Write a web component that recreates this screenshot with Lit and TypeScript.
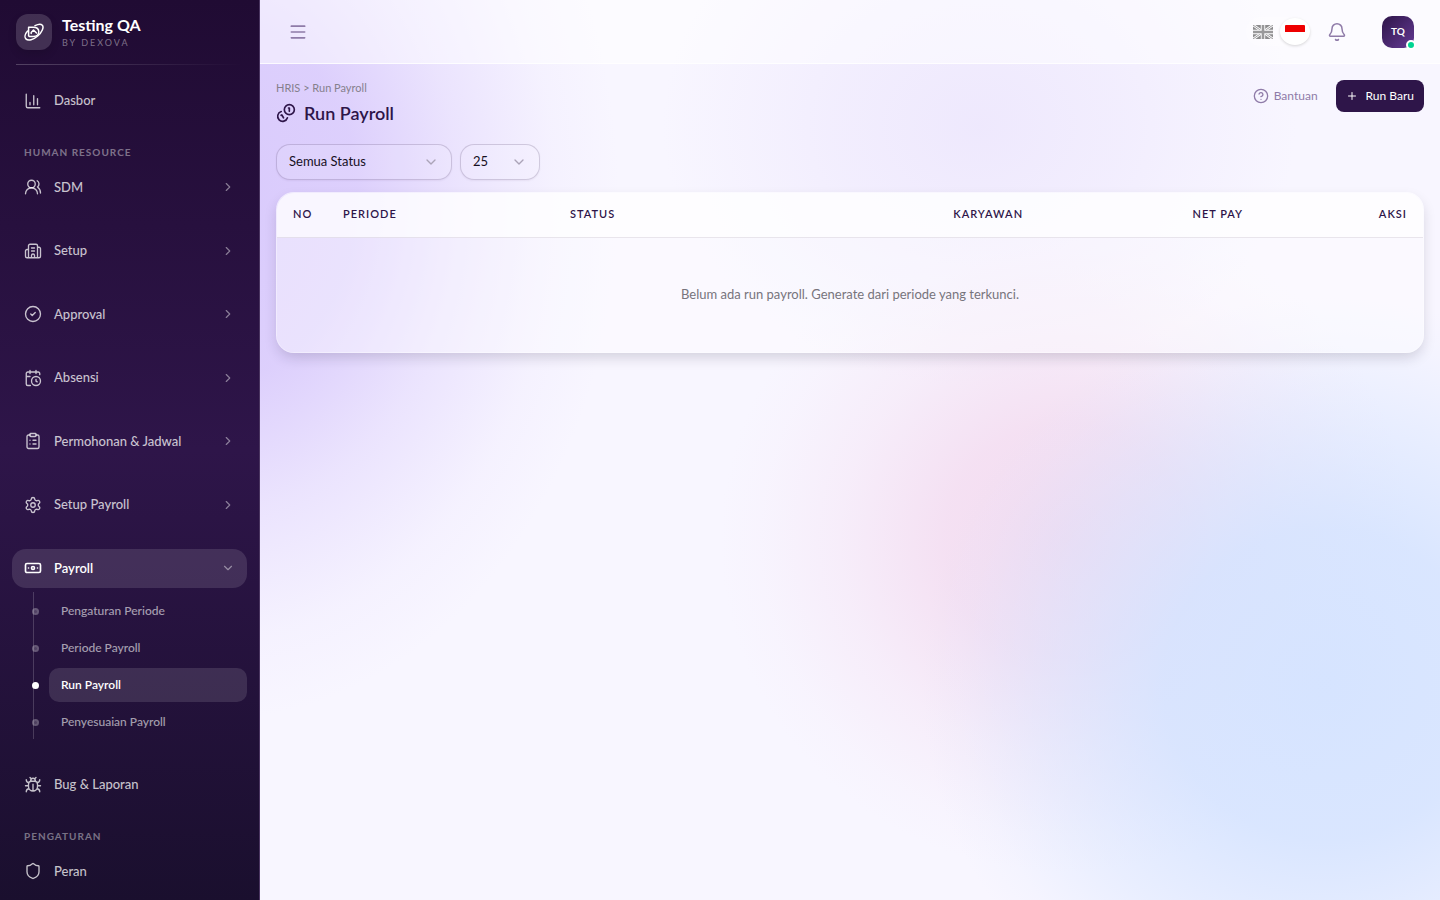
import { LitElement, html, svg, css, nothing } from "lit";
import { customElement, property, state } from "lit/decorators.js";
import { classMap } from "lit/directives/class-map.js";

const ICONS: Record<string, unknown> = {
  chart: svg`<path d="M3 3v16a2 2 0 0 0 2 2h16M18 17V9M13 17V5M8 17v-3"/>`,
  users: svg`<path d="M18 21a8 8 0 0 0-16 0"/><circle cx="10" cy="8" r="5"/><path d="M22 20c0-3.37-2-6.5-4-8a5 5 0 0 0-.45-8.3"/>`,
  building: svg`<path d="M10 12h4M10 8h4M14 21v-3a2 2 0 0 0-4 0v3M6 10H4a2 2 0 0 0-2 2v7a2 2 0 0 0 2 2h16a2 2 0 0 0 2-2V9a2 2 0 0 0-2-2h-2M6 21V5a2 2 0 0 1 2-2h8a2 2 0 0 1 2 2v16"/>`,
  check: svg`<circle cx="12" cy="12" r="10"/><path d="m9 12 2 2 4-4"/>`,
  calendar: svg`<path d="M16 14v2.2l1.6 1M16 2v4M21 7.5V6a2 2 0 0 0-2-2H5a2 2 0 0 0-2 2v14a2 2 0 0 0 2 2h3.5M3 10h5M8 2v4"/><circle cx="16" cy="16" r="6"/>`,
  clipboard: svg`<rect width="8" height="4" x="8" y="2" rx="1"/><path d="M16 4h2a2 2 0 0 1 2 2v14a2 2 0 0 1-2 2H6a2 2 0 0 1-2-2V6a2 2 0 0 1 2-2h2M12 11h4M12 16h4M8 11h.01M8 16h.01"/>`,
  settings: svg`<path d="M9.671 4.136a2.34 2.34 0 0 1 4.659 0 2.34 2.34 0 0 0 3.319 1.915 2.34 2.34 0 0 1 2.33 4.033 2.34 2.34 0 0 0 0 3.831 2.34 2.34 0 0 1-2.33 4.033 2.34 2.34 0 0 0-3.319 1.915 2.34 2.34 0 0 1-4.659 0 2.34 2.34 0 0 0-3.32-1.915 2.34 2.34 0 0 1-2.33-4.033 2.34 2.34 0 0 0 0-3.831A2.34 2.34 0 0 1 6.35 6.051a2.34 2.34 0 0 0 3.319-1.915"/><circle cx="12" cy="12" r="3"/>`,
  banknote: svg`<rect width="20" height="12" x="2" y="6" rx="2"/><circle cx="12" cy="12" r="2"/><path d="M6 12h.01M18 12h.01"/>`,
  bug: svg`<path d="M12 20v-9M14 7a4 4 0 0 1 4 4v3a6 6 0 0 1-12 0v-3a4 4 0 0 1 4-4zM14.12 3.88 16 2M21 21a4 4 0 0 0-3.81-4M21 5a4 4 0 0 1-3.55 3.97M22 13h-4M3 21a4 4 0 0 1 3.81-4M3 5a4 4 0 0 0 3.55 3.97M6 13H2M8 2l1.88 1.88M9 7.13V6a3 3 0 1 1 6 0v1.13"/>`,
  shield: svg`<path d="M20 13c0 5-3.5 7.5-7.66 8.95a1 1 0 0 1-.67-.01C7.5 20.5 4 18 4 13V6a1 1 0 0 1 1-1c2 0 4.5-1.2 6.24-2.72a1.17 1.17 0 0 1 1.52 0C14.51 3.81 17 5 19 5a1 1 0 0 1 1 1z"/>`,
  right: svg`<path d="m9 18 6-6-6-6"/>`,
  down: svg`<path d="m6 9 6 6 6-6"/>`,
  menu: svg`<path d="M4 5h16M4 12h16M4 19h16"/>`,
  bell: svg`<path d="M10.268 21a2 2 0 0 0 3.464 0M3.262 15.326A1 1 0 0 0 4 17h16a1 1 0 0 0 .74-1.673C19.41 13.956 18 12.499 18 8A6 6 0 0 0 6 8c0 4.499-1.411 5.956-2.738 7.326"/>`,
  help: svg`<circle cx="12" cy="12" r="10"/><path d="M9.09 9a3 3 0 0 1 5.83 1c0 2-3 3-3 3M12 17h.01"/>`,
  plus: svg`<path d="M5 12h14M12 5v14"/>`,
  coins: svg`<path d="M13.744 17.736a6 6 0 1 1-7.48-7.48M15 6h1v4M6.134 14.768l.866-.5 2 3.464"/><circle cx="16" cy="8" r="6"/>`,
};

@customElement("ui-icon")
class UiIcon extends LitElement {
  @property() name = "";
  @property({ type: Number }) size = 18;
  @property({ type: Number }) weight = 2;
  static styles = css`
    :host { display: inline-flex; flex: none; }
    svg { display: block; fill: none; stroke: currentColor; stroke-linecap: round; stroke-linejoin: round; }
  `;
  render() {
    return html`<svg width=${this.size} height=${this.size} viewBox="0 0 24 24" stroke-width=${this.weight} aria-hidden="true">${ICONS[this.name]}</svg>`;
  }
}

interface Item {
  label: string;
  icon: string;
  leaf?: boolean;
  children?: string[];
}

const SECTIONS: { title?: string; items: Item[] }[] = [
  { items: [{ label: "Dasbor", icon: "chart", leaf: true }] },
  {
    title: "HUMAN RESOURCE",
    items: [
      { label: "SDM", icon: "users" },
      { label: "Setup", icon: "building" },
      { label: "Approval", icon: "check" },
      { label: "Absensi", icon: "calendar" },
      { label: "Permohonan & Jadwal", icon: "clipboard" },
      { label: "Setup Payroll", icon: "settings" },
      {
        label: "Payroll",
        icon: "banknote",
        children: ["Pengaturan Periode", "Periode Payroll", "Run Payroll", "Penyesuaian Payroll"],
      },
      { label: "Bug & Laporan", icon: "bug", leaf: true },
    ],
  },
  { title: "PENGATURAN", items: [{ label: "Peran", icon: "shield", leaf: true }] },
];

@customElement("app-sidebar")
class AppSidebar extends LitElement {
  @state() private open = "Payroll";
  static styles = css`
    :host {
      box-sizing: border-box; flex: none; width: 260px; display: flex; flex-direction: column; overflow: hidden;
      background: linear-gradient(180deg, #200b33 0%, #2e1549 50%, #1a0f2e 100%);
      border-right: 1px solid #4a3560; color: #fff;
    }
    .brand { display: flex; align-items: center; gap: 10px; padding: 14px 16px; }
    .mark {
      display: grid; place-items: center; width: 36px; height: 36px; border-radius: 12px;
      background: rgba(255, 255, 255, 0.15); box-shadow: 0 4px 8px rgba(0, 0, 0, 0.12);
    }
    .name { font-size: 16px; line-height: 22px; font-weight: 700; }
    .by { font-size: 9px; line-height: 14px; letter-spacing: 2px; color: rgba(255, 255, 255, 0.42); }
    .rule { flex: none; height: 1px; margin: 0 16px; background: linear-gradient(90deg, rgba(255, 255, 255, 0.22), transparent); }
    nav { padding: 16px 12px; }
    .title { margin: 24px 12px 8px; font-size: 10px; line-height: 15px; font-weight: 700; letter-spacing: 1px; color: rgba(255, 255, 255, 0.42); }
    .list { display: flex; flex-direction: column; gap: 24px; margin: 0; padding: 0; list-style: none; }
    .row {
      box-sizing: border-box; width: 100%; display: flex; align-items: center; gap: 12px; padding: 10px 12px;
      border: 0; border-radius: 14px; background: none; color: rgba(255, 255, 255, 0.75); text-decoration: none;
      font: inherit; font-size: 13px; line-height: 1.5; font-weight: 500; text-align: left;
    }
    .row .text { flex: 1; }
    .row .arrow { color: rgba(255, 255, 255, 0.45); }
    .row.on { background: rgba(255, 255, 255, 0.12); color: #fff; font-weight: 600; }
    .sub {
      margin: 4px 0 2px 21px; padding: 2px 0 0 15px; border-left: 1px solid rgba(255, 255, 255, 0.18);
      display: flex; flex-direction: column; gap: 3px; list-style: none;
    }
    .sub li { position: relative; }
    .sub a {
      display: block; padding: 8px 12px; border-radius: 10px; text-decoration: none;
      color: rgba(255, 255, 255, 0.6); font-size: 12px; line-height: 18px; font-weight: 500;
    }
    .sub li::before {
      content: ""; position: absolute; left: -17px; top: 14px; box-sizing: border-box; width: 7px; height: 7px;
      border-radius: 50%; border: 2px solid rgba(255, 255, 255, 0.12); background: rgba(255, 255, 255, 0.2);
    }
    .sub .current a { background: rgba(255, 255, 255, 0.12); color: #fff; font-weight: 600; }
    .sub .current::before { background: #fff; border-color: #fff; }
  `;
  private item(i: Item) {
    if (i.leaf) {
      return html`<li><a class="row" href="#"><ui-icon name=${i.icon} weight="1.8"></ui-icon><span class="text">${i.label}</span></a></li>`;
    }
    const on = this.open === i.label;
    return html`<li>
      <button type="button" class=${classMap({ row: true, on })} aria-expanded=${on} @click=${() => (this.open = on ? "" : i.label)}>
        <ui-icon name=${i.icon} weight=${on ? 2.2 : 1.8}></ui-icon><span class="text">${i.label}</span>
        <ui-icon class="arrow" name=${on ? "down" : "right"} size="14"></ui-icon>
      </button>
      ${on && i.children
        ? html`<ul class="sub">${i.children.map((c) => html`<li class=${c === "Run Payroll" ? "current" : ""}><a href="#">${c}</a></li>`)}</ul>`
        : nothing}
    </li>`;
  }
  render() {
    return html`
      <div class="brand">
        <span class="mark">
          <svg width="20" height="20" viewBox="0 0 20 20" fill="none" stroke="#fff" stroke-width="1.5" stroke-linecap="round" stroke-linejoin="round" aria-hidden="true">
            <path d="M3.600 9C1 11.800.300 15.200 1.900 16.900c2.300 2.200 7.600.8 11.800-2.900C18 10.200 20.200 5.200 18.300 3.200 16.900 1.800 14 2.200 11 3.700"/>
            <path d="M4.600 14V5.200h4.600c3.500 0 5.600 1.800 5.600 4.600 0 2.900-2.300 4.700-5.600 4.700H5.400"/>
            <path d="M7.200 11.600V10.500L9.500 8l3 3"/>
          </svg>
        </span>
        <div><div class="name">Testing QA</div><div class="by">BY DEXOVA</div></div>
      </div>
      <div class="rule"></div>
      <nav>
        ${SECTIONS.map((s) => html`${s.title ? html`<div class="title">${s.title}</div>` : nothing}<ul class="list">${s.items.map((i) => this.item(i))}</ul>`)}
      </nav>`;
  }
}

@customElement("app-header")
class AppHeader extends LitElement {
  static styles = css`
    :host {
      box-sizing: border-box; height: 64px; display: flex; align-items: center; padding: 0 26px 0 28px;
      background: rgba(255, 255, 255, 0.5); border-bottom: 1px solid rgba(255, 255, 255, 0.8); color: #8f7ba8;
    }
    button { display: grid; place-items: center; padding: 0; border: 0; background: none; color: inherit; font: inherit; }
    .end { margin-left: auto; display: flex; align-items: center; }
    .langs { display: flex; align-items: center; gap: 2px; padding: 1px 2px; border-radius: 16px; background: rgba(255, 255, 255, 0.3); }
    .lang { width: 30px; height: 27px; border-radius: 50%; }
    .lang.off { filter: grayscale(1); opacity: 0.5; }
    .lang.on { background: #fff; box-shadow: 0 1px 3px rgba(0, 0, 0, 0.16); }
    .bell { margin: 0 35px 0 15px; }
    .avatar {
      position: relative; width: 32px; height: 32px; border-radius: 10px; color: #fff;
      background: linear-gradient(135deg, #2e1549, #643a94); font-size: 10px; line-height: 12px; font-weight: 700; padding-bottom: 2px;
    }
    .avatar::after {
      content: ""; position: absolute; right: -2px; bottom: -2px; width: 6px; height: 6px; border-radius: 50%;
      background: #00d492; border: 2px solid #fff;
    }
  `;
  render() {
    return html`
      <button type="button" aria-label="Menu"><ui-icon name="menu" size="20"></ui-icon></button>
      <div class="end">
        <div class="langs">
          <button type="button" class="lang off" aria-label="English">
            <svg width="20" height="14" viewBox="0 0 20 14" aria-hidden="true">
              <path fill="#012169" d="M0 0h20v14H0z"/>
              <path stroke="#fff" stroke-width="2.600" d="m0 0 20 14M20 0 0 14"/>
              <path stroke="#c8102e" stroke-width="1" d="m0 0 20 14M20 0 0 14"/>
              <path stroke="#fff" stroke-width="4.400" d="M10 0v14M0 7h20"/>
              <path stroke="#c8102e" stroke-width="2.600" d="M10 0v14M0 7h20"/>
            </svg>
          </button>
          <button type="button" class="lang on" aria-label="Bahasa Indonesia">
            <svg width="20" height="14" viewBox="0 0 20 14" aria-hidden="true"><path fill="#fff" d="M0 7h20v7H0z"/><path fill="#ee0000" d="M1 0h18a1 1 0 0 1 1 1v6H0V1a1 1 0 0 1 1-1z"/></svg>
          </button>
        </div>
        <button type="button" class="bell" aria-label="Notifikasi"><ui-icon name="bell" size="20" weight="1.8"></ui-icon></button>
        <button type="button" class="avatar">TQ</button>
      </div>`;
  }
}

@customElement("app-root")
class AppRoot extends LitElement {
  static styles = css`
    :host {
      display: flex; height: 100vh; overflow: hidden; font-family: Lato, "Liberation Sans", sans-serif; color: #2e1549;
      background:
        radial-gradient(ellipse 28vw 43vh at 92vw 76vh, rgba(212, 227, 255, 0.95) 0%, rgba(212, 227, 255, 0.85) 40%, rgba(212, 227, 255, 0.42) 70%, rgba(212, 227, 255, 0.1) 90%, rgba(212, 227, 255, 0) 100%),
        radial-gradient(ellipse 24vw 37vh at 74vw 60vh, rgba(243, 216, 238, 0.9) 0%, rgba(243, 216, 238, 0.72) 35%, rgba(243, 216, 238, 0.3) 65%, rgba(243, 216, 238, 0.07) 88%, rgba(243, 216, 238, 0) 100%),
        radial-gradient(ellipse 22vw 29vh at 68vw 14vh, rgba(233, 225, 252, 0.65) 0%, rgba(233, 225, 252, 0.4) 45%, rgba(233, 225, 252, 0) 100%),
        radial-gradient(ellipse 28vw 58vh at 15vw 22vh, #d9cafc 0%, rgba(217, 202, 252, 0.88) 35%, rgba(217, 202, 252, 0.42) 60%, rgba(217, 202, 252, 0.1) 84%, rgba(217, 202, 252, 0) 100%),
        #f8f6ff;
    }
    .main { flex: 1; min-width: 0; display: flex; flex-direction: column; }
    .content { padding: 16px; }
    .head { display: flex; justify-content: space-between; align-items: flex-start; }
    .crumb { font-size: 11px; line-height: 16px; color: #85808c; }
    h1 { display: flex; align-items: center; gap: 8px; margin: 4px 0 0; font-size: 18px; line-height: 26px; font-weight: 600; }
    .actions { display: flex; gap: 8px; }
    .actions button {
      display: flex; align-items: center; gap: 5px; height: 32px; padding: 0 10px; border: 0; border-radius: 8px;
      background: none; color: #8f7ba8; font: inherit; font-size: 12px; line-height: 16px;
    }
    .actions .primary { gap: 8px; background: #2e1549; color: #fff; }
    .filters { display: flex; gap: 8px; margin: 18px 0 12px; }
    .field { position: relative; display: flex; align-items: center; }
    .field ui-icon { position: absolute; right: 13px; color: #aba3b8; pointer-events: none; }
    select {
      appearance: none; box-sizing: border-box; height: 36px; width: 176px; padding: 0 12px 2px; border-radius: 14px;
      border: 1px solid rgba(46, 21, 73, 0.18); background: rgba(255, 255, 255, 0.1); color: #17101f; font: inherit; font-size: 13px;
      box-shadow: 0 1px 2px rgba(46, 21, 73, 0.06);
    }
    .short select { width: 80px; }
    .card {
      border: 1px solid rgba(255, 255, 255, 0.6); border-radius: 18px; overflow: hidden; background: rgba(255, 255, 255, 0.4);
      background-clip: padding-box; box-shadow: 0 6px 14px -2px rgba(30, 20, 50, 0.18);
    }
    table { width: 100%; table-layout: fixed; border-collapse: collapse; }
    th {
      padding: 13px 16px 15px; text-align: left; font-size: 11px; line-height: 16px; font-weight: 600; letter-spacing: 1px;
      background: rgba(255, 255, 255, 0.7); border-bottom: 1px solid rgba(46, 21, 73, 0.1);
    }
    th.end { text-align: right; }
    .no { width: 50px; box-sizing: border-box; }
    .periode { width: 19.8%; box-sizing: border-box; }
    .net { width: 19.2%; box-sizing: border-box; }
    .aksi { width: 14.3%; box-sizing: border-box; }
    .empty { padding: 47px 16px 49px; text-align: center; font-size: 13px; line-height: 18px; color: #77747c; }
  `;
  render() {
    return html`
      <app-sidebar></app-sidebar>
      <div class="main">
        <app-header></app-header>
        <main class="content">
          <div class="head">
            <div>
              <div class="crumb">HRIS &gt; Run Payroll</div>
              <h1><ui-icon name="coins" size="20"></ui-icon>Run Payroll</h1>
            </div>
            <div class="actions">
              <button type="button"><ui-icon name="help" size="16"></ui-icon>Bantuan</button>
              <button type="button" class="primary"><ui-icon name="plus" size="12"></ui-icon>Run Baru</button>
            </div>
          </div>
          <div class="filters">
            <div class="field"><select aria-label="Status"><option>Semua Status</option></select><ui-icon name="down" size="16"></ui-icon></div>
            <div class="field short"><select aria-label="Jumlah baris"><option>25</option></select><ui-icon name="down" size="16"></ui-icon></div>
          </div>
          <div class="card">
            <table>
              <thead>
                <tr>
                  <th class="no">NO</th><th class="periode">PERIODE</th><th>STATUS</th><th class="end">KARYAWAN</th>
                  <th class="end net">NET PAY</th><th class="end aksi">AKSI</th>
                </tr>
              </thead>
              <tbody><tr><td class="empty" colspan="6">Belum ada run payroll. Generate dari periode yang terkunci.</td></tr></tbody>
            </table>
          </div>
        </main>
      </div>`;
  }
}
